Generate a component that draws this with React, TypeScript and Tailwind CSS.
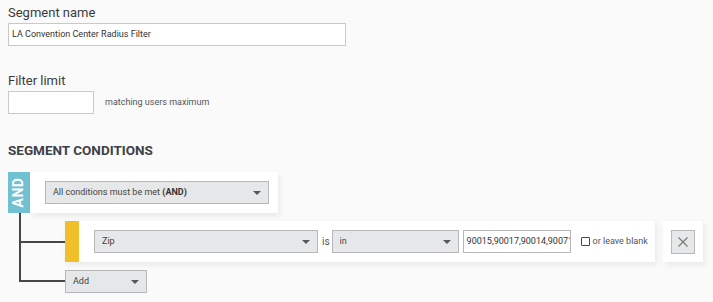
import React from 'react';

const font = { fontFamily: 'Roboto, "Liberation Sans", sans-serif' };

const Caret = () => (
  <svg width="8" height="4" viewBox="0 0 8 4" className="shrink-0">
    <path d="M0 0 H8 L4 4 Z" fill="#55585d" />
  </svg>
);

const Select = ({ label, className }: { label: React.ReactNode; className: string }) => (
  <div
    className={`flex h-[23px] items-center justify-between border border-[#b5b7ba] bg-[#e6e7e8] pl-[7px] pr-[7px] text-[9px] text-[#444] ${className}`}
  >
    <span className="truncate">{label}</span>
    <Caret />
  </div>
);

const App = () => {
  return (
    <div className="min-h-screen bg-[#fafafa] pl-2 pt-[5px] text-[#333]" style={font}>
      {/* Segment name */}
      <div className="h-[16px] text-[13px] leading-[16px] text-[#3a3a3a]">Segment name</div>
      <div className="mt-[2px] flex h-[23px] w-[338px] items-center border border-[#c9c9c9] bg-white px-[3px] text-[9px] text-[#333]">
        LA Convention Center Radius Filter
      </div>

      {/* Filter limit */}
      <div className="mt-[27px] h-[16px] text-[13px] leading-[16px] text-[#3a3a3a]">Filter limit</div>
      <div className="mt-[2px] flex items-center">
        <div className="h-[23px] w-[86px] border border-[#c9c9c9] bg-white" />
        <span className="ml-[11px] text-[9px] text-[#555]">matching users maximum</span>
      </div>

      {/* Segment conditions */}
      <div className="mt-[28px] h-[16px] text-[13.5px] font-bold leading-[16px] text-[#3d4146]">
        SEGMENT CONDITIONS
      </div>

      <div className="mt-[14px]">
        {/* AND row */}
        <div className="flex h-[41px]">
          <div className="flex w-[22px] items-center justify-center bg-[#72c1d3]">
            <span className="-rotate-90 text-[14px] font-bold tracking-[0.5px] text-white">AND</span>
          </div>
          <div className="flex w-[248px] items-center bg-white pl-[15px] shadow-[2px_3px_6px_rgba(0,0,0,0.07)]">
            <Select
              className="w-[224px]"
              label={
                <>
                  All conditions must be met <b className="text-[#333]">(AND)</b>
                </>
              }
            />
          </div>
        </div>

        {/* children */}
        <div className="ml-[11px] flex flex-col">
          {/* condition row */}
          <div className="flex items-stretch">
            <div className="flex w-[46px] items-center border-l-2 border-[#474747]">
              <div className="h-[2px] w-full bg-[#474747]" />
            </div>
            <div className="flex py-[8px]">
              <div className="flex h-[41px] items-center bg-white shadow-[2px_3px_6px_rgba(0,0,0,0.07)]">
                <div className="h-full w-[14px] bg-[#f0bf2a]" />
                <div className="flex items-center pl-[15px] pr-[7px]">
                  <Select className="w-[224px]" label="Zip" />
                  <span className="ml-[4px] mr-[2px] text-[10px] text-[#555]">is</span>
                  <Select className="w-[127px]" label="in" />
                  <div className="ml-[4px] flex h-[23px] w-[108px] items-center overflow-hidden whitespace-nowrap border border-[#b5b7ba] bg-white pl-[3px] text-[9px] text-[#333]">
                    90015,90017,90014,90071,9
                  </div>
                  <div className="ml-[10px] h-[9px] w-[9px] shrink-0 rounded-[1px] border border-[#444] bg-white" />
                  <span className="ml-[3px] whitespace-nowrap text-[9px] text-[#555]">or leave blank</span>
                </div>
              </div>
              <div className="ml-[8px] flex h-[41px] w-[40px] items-center justify-center bg-white shadow-[2px_3px_6px_rgba(0,0,0,0.07)]">
                <div className="flex h-[24px] w-[24px] items-center justify-center border border-[#b5b7ba] bg-[#e6e7e8]">
                  <svg width="10" height="10" viewBox="0 0 10 10">
                    <path d="M0.5 0.5 L9.5 9.5 M9.5 0.5 L0.5 9.5" stroke="#777" strokeWidth="1.1" />
                  </svg>
                </div>
              </div>
            </div>
          </div>

          {/* add row */}
          <div className="flex items-start">
            <div className="h-[12px] w-[46px] border-b-2 border-l-2 border-[#474747]" />
            <Select className="h-[23px] w-[82px]" label="Add" />
          </div>
        </div>
      </div>
    </div>
  );
};

export default App;
